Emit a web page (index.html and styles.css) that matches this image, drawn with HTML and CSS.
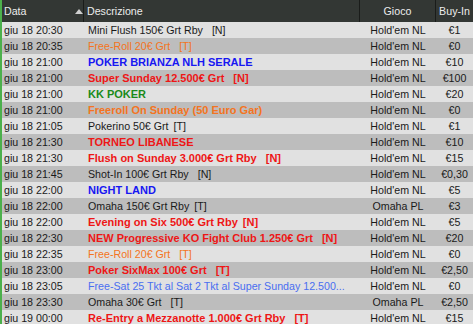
FILE: index.html
```html
<!DOCTYPE html>
<html>
<head>
<meta charset="utf-8">
<link rel="stylesheet" href="styles.css">
</head>
<body>
<div class="list">
  <div class="row head">
    <div class="c c1 sorted">Data<span class="arrow"></span></div>
    <div class="c c2">Descrizione</div>
    <div class="c c3">Gioco</div>
    <div class="c c4">Buy-In</div>
  </div>
  <div class="row odd"><div class="c c1">giu 18 20:30</div><div class="c c2 black">Mini Flush 150€ Grt Rby<span class="tag">[N]</span></div><div class="c c3">Hold'em NL</div><div class="c c4">€1</div></div>
  <div class="row even"><div class="c c1">giu 18 20:35</div><div class="c c2 orange">Free-Roll 20€ Grt<span class="tag">[T]</span></div><div class="c c3">Hold'em NL</div><div class="c c4">€0</div></div>
  <div class="row odd"><div class="c c1">giu 18 21:00</div><div class="c c2 blue b">POKER BRIANZA NLH SERALE</div><div class="c c3">Hold'em NL</div><div class="c c4">€10</div></div>
  <div class="row even"><div class="c c1">giu 18 21:00</div><div class="c c2 red b">Super Sunday 12.500€ Grt<span class="tag">[N]</span></div><div class="c c3">Hold'em NL</div><div class="c c4">€100</div></div>
  <div class="row odd"><div class="c c1">giu 18 21:00</div><div class="c c2 green b">KK POKER</div><div class="c c3">Hold'em NL</div><div class="c c4">€20</div></div>
  <div class="row even"><div class="c c1">giu 18 21:00</div><div class="c c2 orange b">Freeroll On Sunday (50 Euro Gar)</div><div class="c c3">Hold'em NL</div><div class="c c4">€0</div></div>
  <div class="row odd"><div class="c c1">giu 18 21:05</div><div class="c c2 black">Pokerino 50€ Grt<span class="tag near">[T]</span></div><div class="c c3">Hold'em NL</div><div class="c c4">€1</div></div>
  <div class="row even"><div class="c c1">giu 18 21:30</div><div class="c c2 red b">TORNEO LIBANESE</div><div class="c c3">Hold'em NL</div><div class="c c4">€10</div></div>
  <div class="row odd"><div class="c c1">giu 18 21:30</div><div class="c c2 red b">Flush on Sunday 3.000€ Grt Rby<span class="tag">[N]</span></div><div class="c c3">Hold'em NL</div><div class="c c4">€15</div></div>
  <div class="row even"><div class="c c1">giu 18 21:45</div><div class="c c2 black">Shot-In 100€ Grt Rby<span class="tag">[N]</span></div><div class="c c3">Hold'em NL</div><div class="c c4">€0,30</div></div>
  <div class="row odd"><div class="c c1">giu 18 22:00</div><div class="c c2 blue b">NIGHT LAND</div><div class="c c3">Hold'em NL</div><div class="c c4">€5</div></div>
  <div class="row even"><div class="c c1">giu 18 22:00</div><div class="c c2 black">Omaha 150€ Grt Rby<span class="tag near">[T]</span></div><div class="c c3">Omaha PL</div><div class="c c4">€3</div></div>
  <div class="row odd"><div class="c c1">giu 18 22:00</div><div class="c c2 red b">Evening on Six 500€ Grt Rby<span class="tag near">[N]</span></div><div class="c c3">Hold'em NL</div><div class="c c4">€5</div></div>
  <div class="row even"><div class="c c1">giu 18 22:30</div><div class="c c2 red b">NEW Progressive KO Fight Club 1.250€ Grt<span class="tag">[N]</span></div><div class="c c3">Hold'em NL</div><div class="c c4">€20</div></div>
  <div class="row odd"><div class="c c1">giu 18 22:35</div><div class="c c2 orange">Free-Roll 20€ Grt<span class="tag">[T]</span></div><div class="c c3">Hold'em NL</div><div class="c c4">€0</div></div>
  <div class="row even"><div class="c c1">giu 18 23:00</div><div class="c c2 red b">Poker SixMax 100€ Grt<span class="tag">[T]</span></div><div class="c c3">Hold'em NL</div><div class="c c4">€2,50</div></div>
  <div class="row odd"><div class="c c1">giu 18 23:05</div><div class="c c2 lblue">Free-Sat 25 Tkt al Sat 2 Tkt al Super Sunday 12.500...</div><div class="c c3">Hold'em NL</div><div class="c c4">€0</div></div>
  <div class="row even"><div class="c c1">giu 18 23:30</div><div class="c c2 black">Omaha 30€ Grt<span class="tag">[T]</span></div><div class="c c3">Omaha PL</div><div class="c c4">€2,50</div></div>
  <div class="row odd"><div class="c c1">giu 19 00:00</div><div class="c c2 red b">Re-Entry a Mezzanotte 1.000€ Grt Rby<span class="tag">[T]</span></div><div class="c c3">Hold'em NL</div><div class="c c4">€15</div></div>
</div>
</body>
</html>
```

FILE: styles.css
```css
html, body {
  margin: 0;
  padding: 0;
  background: #e0e0e0;
}
body {
  font-family: "Liberation Sans", Arial, sans-serif;
  font-size: 10.67px;
  color: #1a1a1a;
  width: 473px;
  height: 324px;
  overflow: hidden;
}
.list {
  border-left: 2px solid #4cb04c;
  width: 471px;
}
.row {
  display: grid;
  grid-template-columns: 82px 276px 76px 37px;
  height: 16px;
  line-height: 16px;
}
.row.odd { background: #e1e1e1; }
.row.even { background: #bdbdbd; }
.c {
  white-space: nowrap;
  overflow: hidden;
}
.c1 { padding-left: 2px; }
.c2 { padding-left: 4px; }
.c3, .c4 { text-align: center; }
.head {
  height: 22px;
  line-height: 22px;
  background: #333734;
  color: #ececec;
}
.head .c {
  border-right: 1px solid #1a1c1a;
}
.head .c4 { border-right: none; }
.head .c2 { padding-left: 3px; }
.sorted {
  position: relative;
}
.arrow {
  position: absolute;
  left: 73px;
  top: 9px;
  width: 0;
  height: 0;
  border-left: 4px solid transparent;
  border-right: 4px solid transparent;
  border-bottom: 5px solid #cfcfcf;
}
.b { font-weight: bold; font-size: 11px; }
.black { color: #1a1a1a; }
.orange { color: #f47421; }
.blue { color: #1717f2; }
.red { color: #ee1616; }
.green { color: #1a8a1a; }
.lblue { color: #4a6ef0; }
.tag { margin-left: 9px; }
.tag.near { margin-left: 5px; }
```
